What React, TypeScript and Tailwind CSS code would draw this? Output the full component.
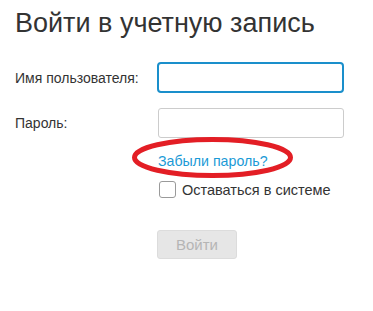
import React from "react";

export default function App() {
  return (
    <div className="w-[373px] h-[311px] bg-white text-[#333333] overflow-hidden" style={{ fontFamily: '"Liberation Sans", Arial, sans-serif' }}>
      <h1 className="mt-[8px] pl-[15px] text-[27px] leading-[30px] font-normal text-[#333333] whitespace-nowrap">
        Войти в учетную запись
      </h1>

      <div className="mt-[24px] flex items-center h-[31px]">
        <label className="w-[157px] pl-[15px] text-[14px] leading-[20px]">Имя пользователя:</label>
        <input
          type="text"
          className="w-[187px] h-[31px] border-2 border-[#1a8fcb] rounded-[4px] outline-none bg-white"
        />
      </div>

      <div className="mt-[15px] flex items-center h-[30px]">
        <label className="w-[158px] pl-[15px] text-[14px] leading-[20px]">Пароль:</label>
        <input
          type="password"
          className="w-[186px] h-[30px] border border-[#cccccc] rounded-[3px] outline-none bg-white"
        />
      </div>

      <div className="relative mt-[11px] pl-[158px] h-[20px]">
        <a href="#" className="text-[14.2px] leading-[20px] text-[#1b9ad6] no-underline whitespace-nowrap">
          Забыли пароль?
        </a>
        <svg className="absolute left-[132px] top-[-12px]" width="161" height="41" viewBox="0 0 161 41">
          <ellipse cx="80.5" cy="20.5" rx="78" ry="18" fill="none" stroke="#e31e25" strokeWidth="5" />
        </svg>
      </div>

      <div className="mt-[12px] pl-[159px] flex items-center h-[17px]">
        <span className="w-[17px] h-[17px] border border-[#9a9a9a] rounded-[3px] bg-white shrink-0" />
        <span className="ml-[6px] text-[14.5px] leading-[20px] whitespace-nowrap">Оставаться в системе</span>
      </div>

      <div className="mt-[32px] pl-[157px]">
        <button
          type="button"
          disabled
          className="w-[80px] h-[29px] rounded-[3px] bg-[#e6e6e6] border border-[#dcdcdc] text-[#b5b5b5] text-[15px] leading-[20px]"
        >
          Войти
        </button>
      </div>
    </div>
  );
}
